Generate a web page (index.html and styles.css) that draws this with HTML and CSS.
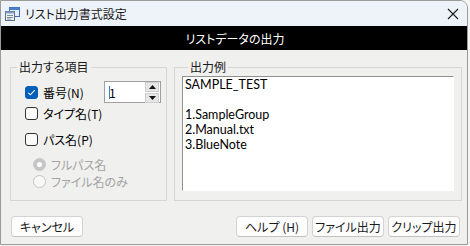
FILE: index.html
```html
<!DOCTYPE html>
<html lang="ja">
<head>
<meta charset="utf-8">
<title>リスト出力書式設定</title>
<link rel="stylesheet" href="styles.css">
</head>
<body>
<div class="window">
  <div class="titlebar">
    <svg class="app-icon" width="16" height="16" viewBox="0 0 16 16">
      <rect x="5.5" y="1.5" width="10" height="9" fill="#e8eef8" stroke="#3d6db5"/>
      <rect x="5.5" y="1.5" width="10" height="2.5" fill="#4a80d0"/>
      <rect x="1.5" y="5.5" width="9" height="9" fill="#fbf3d8" stroke="#5a6f8f"/>
      <rect x="1.5" y="5.5" width="9" height="2" fill="#7d9ccc"/>
      <line x1="3" y1="9.5" x2="9" y2="9.5" stroke="#6f8fbf"/>
      <line x1="3" y1="11.5" x2="9" y2="11.5" stroke="#6f8fbf"/>
      <line x1="3" y1="13" x2="7" y2="13" stroke="#6f8fbf"/>
    </svg>
    <span class="title">リスト出力書式設定</span>
    <svg class="close" width="12" height="12" viewBox="0 0 12 12">
      <path d="M1 1 L11 11 M11 1 L1 11" stroke="#1c1c1c" stroke-width="1.1" fill="none"/>
    </svg>
  </div>
  <div class="header">リストデータの出力</div>
  <div class="main">
    <div class="groups">
      <fieldset class="group items">
        <legend>出力する項目</legend>
        <div class="row row-number">
          <label class="check-label">
            <span class="checkbox checked">
              <svg width="9" height="9" viewBox="0 0 9 9"><path d="M1.3 4.8 L3.4 6.8 L7.8 2.2" stroke="#fff" stroke-width="1.1" fill="none"/></svg>
            </span>
            <span>番号(N)</span>
          </label>
          <div class="spin">
            <span class="spin-value"><span class="caret"></span>1</span>
            <div class="spin-buttons">
              <span class="spin-btn"><svg width="7" height="4" viewBox="0 0 7 4"><path d="M0 4 L3.5 0 L7 4 Z" fill="#111"/></svg></span>
              <span class="spin-btn"><svg width="7" height="4" viewBox="0 0 7 4"><path d="M0 0 L3.5 4 L7 0 Z" fill="#111"/></svg></span>
            </div>
          </div>
        </div>
        <div class="row row-type">
          <label class="check-label"><span class="checkbox"></span><span>タイプ名(T)</span></label>
        </div>
        <div class="row row-path">
          <label class="check-label"><span class="checkbox"></span><span>パス名(P)</span></label>
        </div>
        <div class="row radio-row radio-first disabled">
          <span class="radio selected"></span><span>フルパス名</span>
        </div>
        <div class="row radio-row radio-second disabled">
          <span class="radio"></span><span>ファイル名のみ</span>
        </div>
      </fieldset>
      <fieldset class="group example">
        <legend>出力例</legend>
        <div class="output">
          <div>SAMPLE_TEST</div>
          <div>&nbsp;</div>
          <div>1.SampleGroup</div>
          <div>2.Manual.txt</div>
          <div>3.BlueNote</div>
        </div>
      </fieldset>
    </div>
    <div class="buttons">
      <button class="btn cancel">キャンセル</button>
      <div class="btn-group">
        <button class="btn">ヘルプ (H)</button>
        <button class="btn">ファイル出力</button>
        <button class="btn">クリップ出力</button>
      </div>
    </div>
  </div>
</div>
</body>
</html>
```
FILE: styles.css
```css
* { box-sizing: border-box; }
html, body { margin: 0; padding: 0; }
body {
  width: 470px;
  height: 246px;
  background: #f4f4f2;
  font-family: "Noto Sans CJK JP", sans-serif;
  font-size: 12px;
  font-feature-settings: "palt";
  color: #000;
  overflow: hidden;
}
.window {
  width: 468px;
  height: 245px;
  border: 1px solid #9b9b9b;
  border-top-right-radius: 8px;
  background: #f0f0ee;
  display: flex;
  flex-direction: column;
  overflow: hidden;
}
.titlebar {
  height: 25px;
  background: #eef3fa;
  display: flex;
  align-items: center;
  padding-left: 3px;
}
.app-icon { flex: none; }
.title {
  margin-left: 5px;
  line-height: 16px;
  color: #1a1a1a;
}
.close { margin-left: auto; margin-right: 8px; }
.header {
  height: 24px;
  background: #000;
  color: #fff;
  display: flex;
  align-items: center;
  justify-content: center;
  padding-left: 2px;
}
.main {
  flex: 1;
  display: flex;
  flex-direction: column;
  padding: 9px 5px 0 9px;
}
.groups {
  display: flex;
  gap: 7px;
  height: 142px;
}
.group {
  margin: 0;
  padding: 0;
  border: 1px solid #d6d6d3;
  min-width: 0;
}
.group legend {
  padding: 0 2px;
  margin-left: 6px;
  line-height: 16px;
  color: #1a1a1a;
}
.items { width: 157px; }
.example { flex: 1; padding: 1px 7px 9px 7px; }

.row {
  display: flex;
  align-items: center;
  height: 16px;
  padding-left: 14px;
}
.row-number { height: 22px; margin-top: 6px; }
.row-type { margin-top: 2px; }
.row-path { margin-top: 10px; }
.radio-first { margin-top: 9px; padding-left: 22px; }
.radio-second { margin-top: 1px; padding-left: 22px; }

.check-label {
  display: flex;
  align-items: center;
  gap: 5px;
}
.row-number .check-label { width: 79px; }
.checkbox {
  width: 13px;
  height: 13px;
  border: 1px solid #333;
  border-radius: 3px;
  background: #fafafa;
  display: flex;
  align-items: center;
  justify-content: center;
  flex: none;
}
.checkbox.checked {
  background: #005fb8;
  border-color: #005fb8;
}
.spin {
  width: 57px;
  height: 22px;
  border: 1px solid #a0a0a0;
  background: #fff;
  display: flex;
  align-items: center;
  padding-left: 4px;
}
.spin-value { flex: 1; display: flex; align-items: center; }
.caret {
  display: inline-block;
  width: 1px;
  height: 13px;
  background: #2a7fd4;
  margin-right: -1px;
}
.spin-buttons {
  display: flex;
  flex-direction: column;
  gap: 1px;
  margin-right: 1px;
}
.spin-btn {
  width: 14px;
  height: 10px;
  background: #e6e6e6;
  border: 1px solid #cfcfcf;
  display: flex;
  align-items: center;
  justify-content: center;
}
.radio-row { gap: 5px; }
.disabled { color: #a3a3a3; }
.radio {
  width: 13px;
  height: 13px;
  border-radius: 50%;
  border: 1px solid #c4c4c4;
  background: #f8f8f8;
  flex: none;
}
.radio.selected {
  background: #c6c6c6;
  border-color: #c6c6c6;
  position: relative;
}
.radio.selected::after {
  content: "";
  position: absolute;
  left: 3px;
  top: 3px;
  width: 5px;
  height: 5px;
  border-radius: 50%;
  background: #fff;
}
.output {
  height: 115px;
  background: #fff;
  border-top: 1px solid #8f8f8f;
  border-left: 1px solid #8f8f8f;
  border-right: 1px solid #fff;
  border-bottom: 1px solid #fff;
  padding: 0 2px;
  font-family: Lato, "Noto Sans CJK JP", sans-serif;
  font-size: 12.5px;
  line-height: 15px;
  font-feature-settings: normal;
}
.buttons {
  display: flex;
  justify-content: space-between;
  margin-top: 15px;
  padding: 0 2px 0 1px;
}
.btn-group { display: flex; gap: 4px; }
.btn {
  width: 72px;
  height: 21px;
  padding: 0;
  font: inherit;
  font-feature-settings: "palt";
  color: #1a1a1a;
  background: #fdfdfd;
  border: 1px solid #d3d3d3;
  border-bottom-color: #c2c2c2;
  border-radius: 4px;
  line-height: 18px;
}
```
